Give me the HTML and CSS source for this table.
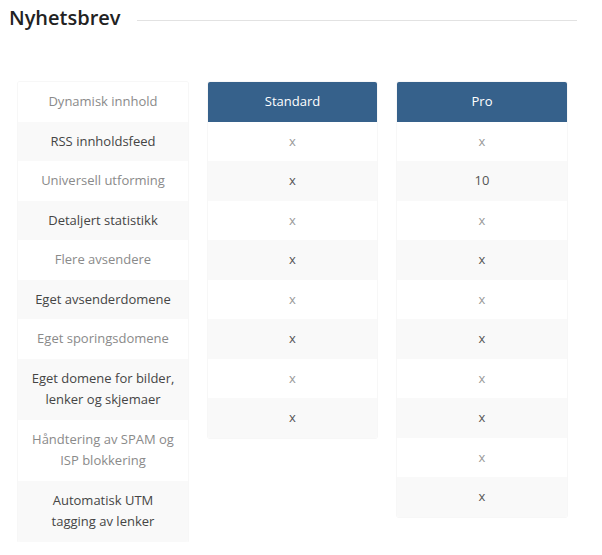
FILE: index.html
```html
<!DOCTYPE html>
<html lang="no">
<head>
<meta charset="utf-8">
<title>Nyhetsbrev</title>
<link rel="stylesheet" href="styles.css">
</head>
<body>
<div class="page">
  <div class="title-row">
    <h2 class="title">Nyhetsbrev</h2>
    <span class="rule"></span>
  </div>
  <div class="plans">
    <ul class="col features">
      <li>Dynamisk innhold</li>
      <li>RSS innholdsfeed</li>
      <li>Universell utforming</li>
      <li>Detaljert statistikk</li>
      <li>Flere avsendere</li>
      <li>Eget avsenderdomene</li>
      <li>Eget sporingsdomene</li>
      <li>Eget domene for bilder, lenker og skjemaer</li>
      <li>Håndtering av SPAM og ISP blokkering</li>
      <li>Automatisk UTM tagging av lenker</li>
    </ul>
    <div class="col plan">
      <div class="plan-head">Standard</div>
      <ul class="plan-rows">
        <li>x</li><li>x</li><li>x</li><li>x</li>
        <li>x</li><li>x</li><li>x</li><li>x</li>
      </ul>
    </div>
    <div class="col plan">
      <div class="plan-head">Pro</div>
      <ul class="plan-rows">
        <li>x</li><li>10</li><li>x</li><li>x</li>
        <li>x</li><li>x</li><li>x</li><li>x</li>
        <li>x</li><li>x</li>
      </ul>
    </div>
  </div>
</div>
</body>
</html>
```
FILE: styles.css
```css
html, body {
  margin: 0;
  padding: 0;
  background: #fff;
}
body {
  font-family: "Open Sans", "Liberation Sans", sans-serif;
  font-size: 13px;
  color: #444;
}
.page {
  width: 568px;
  margin-left: 9px;
}
.title-row {
  display: flex;
  align-items: center;
  gap: 16px;
  padding-top: 4px;
}
.title {
  margin: 0;
  font-size: 20px;
  font-weight: 600;
  line-height: 27px;
  color: #222;
}
.rule {
  flex: 1;
  height: 1px;
  background: #e2e2e2;
  margin-top: 5px;
}
.plans {
  display: grid;
  grid-template-columns: 170px 169px 170px;
  column-gap: 20px;
  align-items: start;
  margin-top: 51px;
  margin-left: 9px;
}
ul {
  list-style: none;
  margin: 0;
  padding: 0;
}
.col {
  box-shadow: 0 0 0 1px #f7f7f7;
  border-radius: 2px;
  overflow: hidden;
}
.features li,
.plan-rows li {
  text-align: center;
  line-height: 21.5px;
  padding: 9px 12px;
}
.features li:nth-child(odd),
.plan-rows li:nth-child(odd) {
  background: #fff;
  color: #8a8a8a;
}
.features li:nth-child(even),
.plan-rows li:nth-child(even) {
  background: #f9f9f9;
  color: #454545;
}
.plan-rows li:nth-child(even) {
  color: #555;
}
.plan-rows li:nth-child(odd) {
  color: #999;
}
.plan-head {
  background: #36618b;
  color: #fff;
  font-weight: 500;
  text-align: center;
  line-height: 21.5px;
  padding: 9px 12px;
}
```
